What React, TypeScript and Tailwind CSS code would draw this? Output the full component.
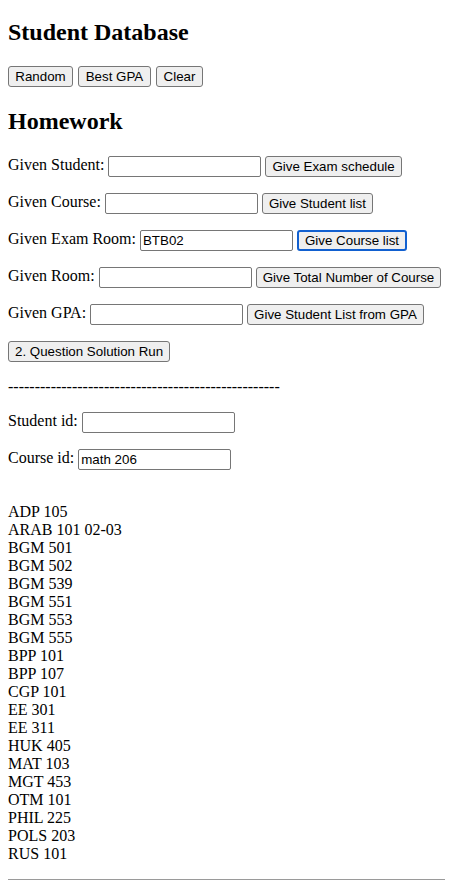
const courses = [
  "ADP 105",
  "ARAB 101 02-03",
  "BGM 501",
  "BGM 502",
  "BGM 539",
  "BGM 551",
  "BGM 553",
  "BGM 555",
  "BPP 101",
  "BPP 107",
  "CGP 101",
  "EE 301",
  "EE 311",
  "HUK 405",
  "MAT 103",
  "MGT 453",
  "OTM 101",
  "PHIL 225",
  "POLS 203",
  "RUS 101",
];

const inputCls =
  "inline-block w-[153px] h-[21px] border border-[#767676] rounded-[2px] px-[2px] align-middle bg-white font-['Liberation_Sans',Arial,sans-serif] text-[13.333px] text-black outline-none";

function Btn({ label, focused, width }: { label: string; focused?: boolean; width?: string }) {
  return (
    <button
      className={`inline-block h-[21px] rounded-[3px] bg-[#efefef] px-[6px] align-middle font-['Liberation_Sans',Arial,sans-serif] text-[13.333px] leading-[normal] text-black ${
        focused ? "border-2 border-[#1160d0] px-[5px]" : "border border-[#767676]"
      } ${width ?? ""}`}
    >
      {label}
    </button>
  );
}

function Row({
  label,
  value,
  button,
  focused,
}: {
  label: string;
  value?: string;
  button?: string;
  focused?: boolean;
}) {
  return (
    <p className="my-4 h-[21px]">
      {label}{" "}
      <input className={inputCls} defaultValue={value ?? ""} />
      {button && (
        <>
          {" "}
          <Btn label={button} focused={focused} />
        </>
      )}
    </p>
  );
}

export default function App() {
  return (
    <div className="min-h-screen bg-white px-2 font-['Liberation_Serif','Times_New_Roman',serif] text-[16px] leading-[normal] text-black">
      <h2 className="mt-[19px] mb-[19.92px] text-[24px] font-bold">Student Database</h2>
      <div className="flex h-[22.6px] items-start gap-[5px]">
        <Btn label="Random" width="w-[65px]" />
        <Btn label="Best GPA" width="w-[73px]" />
        <Btn label="Clear" width="w-[47px]" />
      </div>
      <h2 className="mt-[19.92px] mb-[20.8px] text-[24px] font-bold">Homework</h2>
      <Row label="Given Student:" button="Give Exam schedule" />
      <Row label="Given Course:" button="Give Student list" />
      <Row label="Given Exam Room:" value="BTB02" button="Give Course list" focused />
      <Row label="Given Room:" button="Give Total Number of Course" />
      <Row label="Given GPA:" button="Give Student List from GPA" />
      <p className="my-4 h-[21px]">
        <Btn label="2. Question Solution Run" />
      </p>
      <p className="my-4">---------------------------------------------------</p>
      <Row label="Student id:" />
      <Row label="Course id:" value="math 206" />
      <p className="my-4 leading-[18px]">
        <span className="block h-[17px]" />
        {courses.map((c) => (
          <span key={c} className="block">
            {c}
          </span>
        ))}
      </p>
      <hr className="my-2 border-t border-[#9a9a9a]" />
    </div>
  );
}
